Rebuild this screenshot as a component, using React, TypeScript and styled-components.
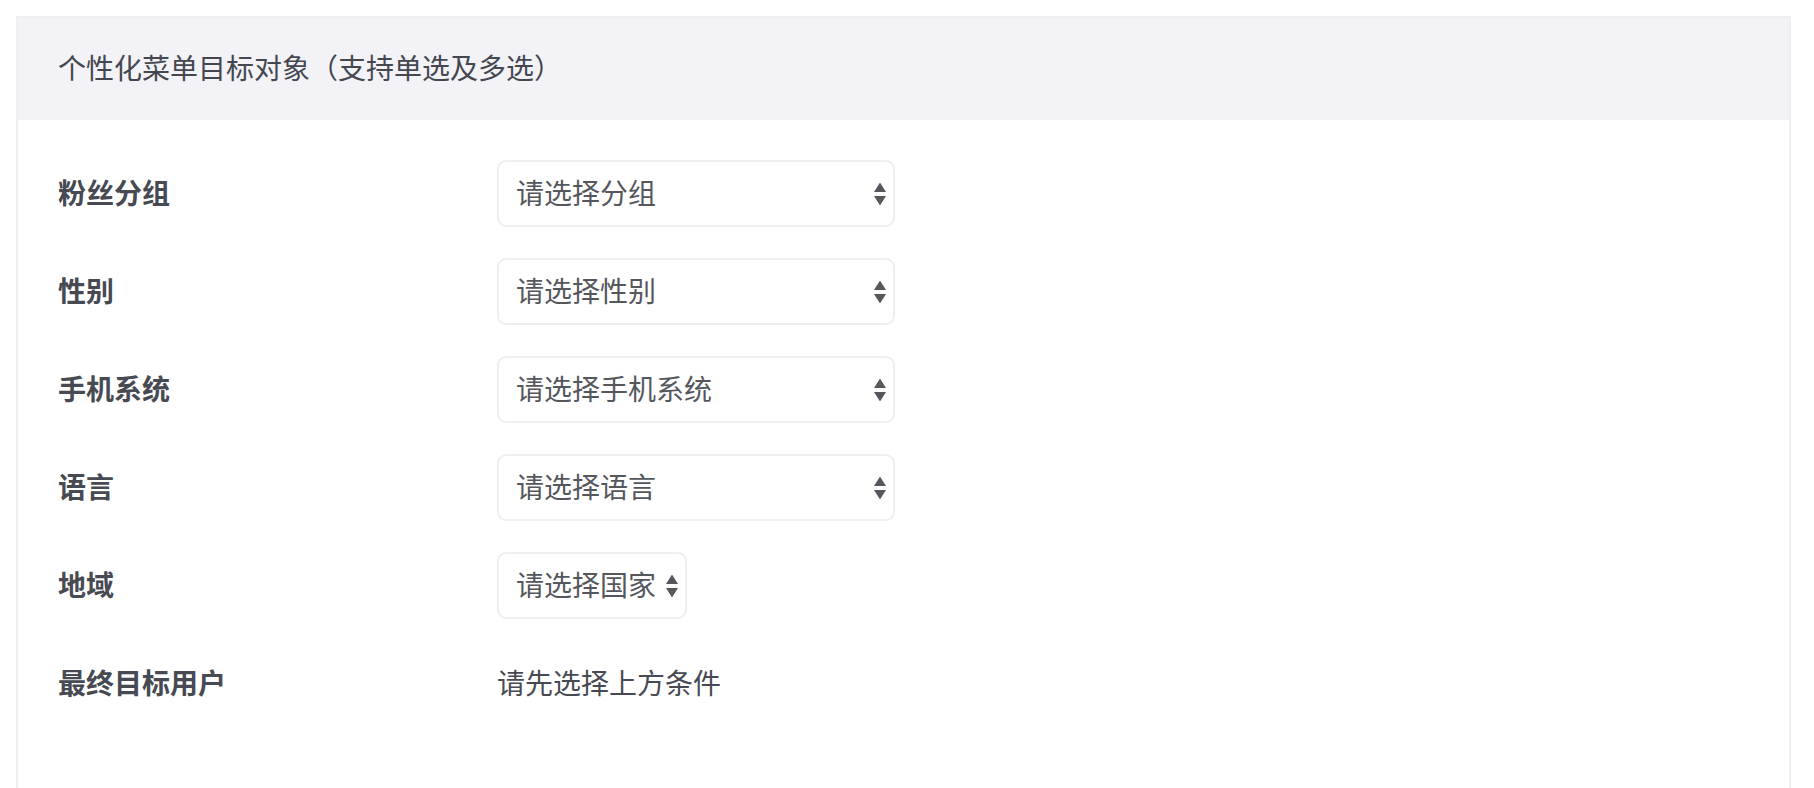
import * as React from 'react';
import styled, {createGlobalStyle} from "styled-components";

const GlobalStyle = createGlobalStyle`
  html, body {
    margin: 0;
    padding: 0;
    background: #ffffff;
  }
  body {
    font-family: "Noto Sans CJK SC", "Noto Sans", sans-serif;
  }
`

const Page = styled.div`
  padding: 16px 23px 0 16px;
  height: 788px;
  box-sizing: border-box;
  overflow: hidden;
`

const Panel = styled.section`
  border: 2px solid #efeff2;
  border-bottom: none;
  height: 800px;
  box-sizing: border-box;
`

const Header = styled.div`
  display: flex;
  align-items: center;

  height: 102px;
  padding: 0 0 4px 40px;
  box-sizing: border-box;

  background-color: #f3f3f7;

  font-size: 28px;
  color: #44474f;
`

const Form = styled.div`
  display: grid;
  grid-template-columns: 439px auto;
  grid-auto-rows: 67px;
  row-gap: 31px;
  align-items: center;
  justify-items: start;

  padding: 40px 40px 0;
`

const Label = styled.label`
  padding-bottom: 4px;
  font-size: 28px;
  font-weight: 700;
  color: #474a52;
`

const SelectWrap = styled.div<{ full?: boolean }>`
  position: relative;
  width: ${props => props.full ? '398px' : 'auto'};
  height: 67px;
`

const Select = styled.select<{ full?: boolean }>`
  appearance: none;
  -webkit-appearance: none;

  width: ${props => props.full ? '100%' : 'auto'};
  height: 100%;
  padding: 0 ${props => props.full ? '40px' : '28px'} 4px 17px;

  border: 2px solid #efeff1;
  border-radius: 9px;
  background-color: #ffffff;
  box-sizing: border-box;

  font-family: "Noto Sans CJK SC", "Noto Sans", sans-serif;
  font-size: 28px;
  color: #55575d;
  outline: none;
`

const Arrows = styled.svg`
  position: absolute;
  top: 50%;
  right: 9px;
  transform: translateY(-50%);
  pointer-events: none;
`

const Hint = styled.span`
  padding-bottom: 4px;
  font-size: 28px;
  color: #474a52;
`

const rows = [
    {label: '粉丝分组', placeholder: '请选择分组', full: true},
    {label: '性别', placeholder: '请选择性别', full: true},
    {label: '手机系统', placeholder: '请选择手机系统', full: true},
    {label: '语言', placeholder: '请选择语言', full: true},
    {label: '地域', placeholder: '请选择国家', full: false},
]

const SelectField = ({placeholder, full}: { placeholder: string, full: boolean }) => (
    <SelectWrap full={full}>
        <Select full={full} defaultValue="">
            <option value="">{placeholder}</option>
        </Select>
        <Arrows width="12" height="23" viewBox="0 0 12 23">
            <polygon points="6,0 12,9.5 0,9.5" fill="#55575d"/>
            <polygon points="0,13.5 12,13.5 6,23" fill="#55575d"/>
        </Arrows>
    </SelectWrap>
)

export default function App() {
    return (
        <Page>
            <GlobalStyle/>
            <Panel>
                <Header>个性化菜单目标对象（支持单选及多选）</Header>
                <Form>
                    {rows.map(row => (
                        <React.Fragment key={row.label}>
                            <Label>{row.label}</Label>
                            <SelectField placeholder={row.placeholder} full={row.full}/>
                        </React.Fragment>
                    ))}
                    <Label>最终目标用户</Label>
                    <Hint>请先选择上方条件</Hint>
                </Form>
            </Panel>
        </Page>
    );
}
